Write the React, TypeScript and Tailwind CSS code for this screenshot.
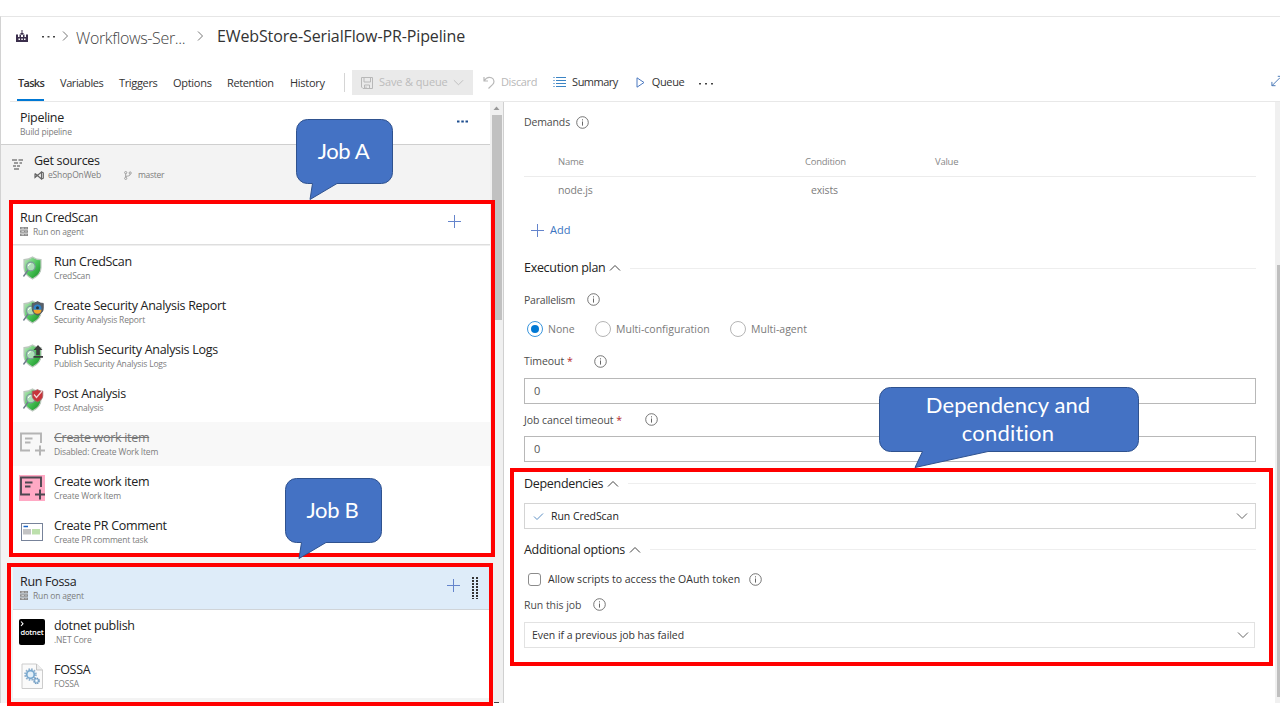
import type { ReactNode } from "react";

const HEAD = "text-[12.5px] leading-4 tracking-[-0.3px] text-[#222] whitespace-nowrap";
const SUB = "text-[8.5px] leading-3 tracking-[-0.16px] text-[#7d7d7d] whitespace-nowrap";

function Chevron({ dir, className = "" }: { dir: "up" | "down" | "right"; className?: string }) {
  const d = dir === "up" ? "M1 8.5 L6 3.5 L11 8.5" : dir === "down" ? "M1 3.5 L6 8.5 L11 3.5" : "M4 1.5 L8.5 6 L4 10.5";
  return (
    <svg viewBox="0 0 12 12" className={`size-3 shrink-0 ${className}`} fill="none" stroke="currentColor">
      <path d={d} />
    </svg>
  );
}

function Info({ className = "" }: { className?: string }) {
  return (
    <svg viewBox="0 0 13 13" className={`size-[13px] shrink-0 text-[#666] ${className}`} fill="none" stroke="currentColor">
      <circle cx="6.5" cy="6.5" r="5.8" strokeWidth="0.9" />
      <path d="M6.5 5.5V9.6M6.5 3.3V4.4" />
    </svg>
  );
}

function Plus({ className = "" }: { className?: string }) {
  return (
    <svg viewBox="0 0 13 13" className={`size-[13px] shrink-0 text-[#6484cc] ${className}`} stroke="currentColor">
      <path d="M0 6.5H13M6.5 0V13" />
    </svg>
  );
}

function Shield({ kind }: { kind: "plain" | "report" | "publish" | "post" }) {
  const id = `g-${kind}`;
  return (
    <svg viewBox="0 0 26 26" className="size-[26px]">
      <defs>
        <linearGradient id={id} x1="0" y1="0" x2="1" y2="1">
          <stop offset="0" stopColor="#c4e8c6" />
          <stop offset="0.5" stopColor="#4cc65a" />
          <stop offset="1" stopColor="#128a20" />
        </linearGradient>
      </defs>
      <path d="M13.500 2C11 3.800 8.500 4.600 5 4.700v8c0 6 3.800 8.800 8.500 11.300c4.700-2.500 8.500-5.300 8.500-11.300V4.700c-3.300 0-6-.9-8.500-2.700z" fill={`url(#${id})`} stroke="#bcc8be" strokeWidth="1.200" />
      <path d="M9.200 15L4.800 21" stroke="#6f7d8c" strokeWidth="1.500" strokeLinecap="round" />
      <circle cx="11.800" cy="11.500" r="4.300" fill="#b5e2c0" fillOpacity="0.9" stroke="#7f9a9c" strokeWidth="1.200" />
      <path d="M9.300 11a2.600 2.600 0 0 1 2.500-2.300" stroke="#fff" fill="none" />
      {kind === "report" && (
        <g>
          <path d="M18.500 2.500c-2 1.300-3.500 1.800-5.300 1.900v5c0 3.600 2.400 5.400 5.300 6.800c3-1.400 5.800-3.200 5.800-6.800v-5c-2 0-3.800-.6-5.800-1.900z" fill="#59616a" stroke="#4b5159" strokeWidth="0.800" />
          <circle cx="18.500" cy="9.300" r="3.900" fill="#2f83ca" />
          <path d="M14.600 10.800a3.900 3.900 0 0 0 7.800 0z" fill="#f3a52c" />
          <circle cx="18.500" cy="8.800" r="1.500" fill="#2c343b" />
        </g>
      )}
      {kind === "publish" && <path d="M19 2l4.500 5h-2.700v5h-3.600V7h-2.700zM14.500 13h9.500v1.800h-9.500z" fill="#3d3d3d" />}
      {kind === "post" && (
        <g>
          <path d="M18.500 2.500c-2 1.200-3.500 1.500-5.300 1.600v4.500c0 3.400 2.400 4.900 5.300 6.200c3-1.300 5.300-2.800 5.300-6.200V4.100c-2 0-3.300-.4-5.300-1.600z" fill="#c8343a" stroke="#a06a6c" strokeWidth="0.800" />
          <path d="M15 7.500l2.500 3L23 4" stroke="#f2d6d6" strokeWidth="1.200" fill="none" />
        </g>
      )}
    </svg>
  );
}

function WorkItem({ active }: { active?: boolean }) {
  return (
    <svg viewBox="0 0 26 26" className="size-[26px]" fill="none" stroke={active ? "#4c4750" : "#b4b4b4"} strokeWidth="2">
      {active && <path d="M0 0H26V26H0z" fill="#ffa9c4" stroke="none" />}
      <path d="M11 19.500H2V2.500H22V12M6 7.500H13.500M6 11.500H11.500" strokeWidth="1.900" />
      <path d="M16 19.500H26M21 14.500V24.500" />
    </svg>
  );
}

function PrComment() {
  return (
    <svg viewBox="0 0 26 26" className="size-[26px]">
      <rect x="2.500" y="4.500" width="21" height="17" fill="#fff" stroke="#77839a" />
      <path d="M4.500 7.500H9" stroke="#1762c4" strokeWidth="1.500" />
      <path d="M4 10H12V15.500H4z" fill="#c3c3c3" />
      <path d="M13 10H21V15.500H13z" fill="#bde0ac" />
    </svg>
  );
}

function Dotnet() {
  return (
    <div className="flex size-[26px] flex-col items-center rounded-[2px] bg-black text-white">
      <svg viewBox="0 0 26 9" className="h-[9px] w-[26px]" fill="none" stroke="#fff" strokeWidth="1.100">
        <path d="M2 2.500L4 4.700L2 7" />
      </svg>
      <span className="text-[7.5px] font-semibold leading-[9px] tracking-[-0.2px]">dotnet</span>
    </div>
  );
}

function Gears() {
  return (
    <svg viewBox="0 0 26 26" className="size-[26px]">
      <path d="M3 1H17.500L23.500 7V25.500H3z" fill="#fafafa" stroke="#cccccc" />
      <path d="M17.500 1V7H23.500" fill="#eee" stroke="#c4c4c4" />
      <circle cx="11.500" cy="11.500" r="5.400" fill="none" stroke="#8eb0ce" strokeWidth="1.800" strokeDasharray="1.600 1.228" />
      <circle cx="11.500" cy="11.500" r="3.800" fill="#e3f0f9" stroke="#79a9cf" strokeWidth="1.800" />
      <circle cx="17.500" cy="17.800" r="2.600" fill="#a9cbe5" stroke="#6f98bd" strokeWidth="1.500" strokeDasharray="1.400 0.640" />
      <circle cx="17.500" cy="17.800" r="1" fill="#fff" />
    </svg>
  );
}

function Server() {
  return (
    <svg viewBox="0 0 8 9" className="h-[9px] w-2 shrink-0">
      <path d="M0 0H8V2.500H0zM0 3.200H8V5.700H0zM0 6.400H8V9H0z" fill="#8c8c8c" />
      <path d="M1.500 1.200H4M1.500 4.400H4M1.500 7.700H4M5.500 1.200H6.500M5.500 4.400H6.500M5.500 7.700H6.500" stroke="#e6e6e6" strokeWidth="0.800" />
    </svg>
  );
}

function Task({ icon, title, sub, disabled }: { icon: ReactNode; title: string; sub: string; disabled?: boolean }) {
  return (
    <div className={`flex h-11 shrink-0 items-center pl-[6px] ${disabled ? "bg-[#f8f8f8]" : "bg-white"}`}>
      <div className="mr-[9px] shrink-0">{icon}</div>
      <div className="flex flex-col">
        <span className={`${HEAD} ${disabled ? "text-[#777]! line-through" : ""}`}>{title}</span>
        <span className={SUB}>{sub}</span>
      </div>
    </div>
  );
}

function JobHeader({ title, selected }: { title: string; selected?: boolean }) {
  return (
    <div
      className={`flex shrink-0 items-center border-b pl-[7px] ${
        selected ? "h-[43px] border-[#d0d4d8] bg-[#deecf9] pb-px" : "h-[42px] border-[#dedede] bg-white"
      }`}
    >
      <div className="flex flex-1 flex-col">
        <span className={HEAD}>{title}</span>
        <span className={`${SUB} flex items-center gap-[5px]`}>
          <Server />
          Run on agent
        </span>
      </div>
      <Plus className={selected ? "mr-[12px] mb-[4px]" : "mr-[29px] mb-[4px]"} />
      {selected && (
        <svg viewBox="0 0 6 23" className="mr-3 mb-px h-[23px] w-[6px] shrink-0" stroke="#333" strokeWidth="2" strokeDasharray="2 1">
          <path d="M1 1V23M5 1V23" />
        </svg>
      )}
    </div>
  );
}

function Section({ title, className = "" }: { title: string; className?: string }) {
  return (
    <div className={`flex shrink-0 items-center ${className}`}>
      <span className={HEAD}>{title}</span>
      <Chevron dir="up" className="ml-1 text-[#444]" />
      <div className="ml-[9px] h-px flex-1 bg-[#eee]" />
    </div>
  );
}

const LABEL = "text-[10.5px] leading-4 tracking-[-0.05px] text-[#4c4c4c] whitespace-nowrap";

function Radio({ label, checked, className = "" }: { label: string; checked?: boolean; className?: string }) {
  return (
    <div className={`flex items-center ${className}`}>
      <span
        className={`flex size-4 shrink-0 items-center justify-center rounded-full border ${
          checked ? "border-[#3a96dd]" : "border-[#b5b5b5]"
        }`}
      >
        {checked && <span className="size-2 rounded-full bg-[#0078d4]" />}
      </span>
      <span className="ml-[5px] whitespace-nowrap text-[10.5px] leading-4 text-[#7a7a7a]">{label}</span>
    </div>
  );
}

function Callout({ path, className, children }: { path: string; className: string; children: ReactNode }) {
  return (
    <div className={`absolute ${className}`}>
      <svg className="absolute inset-0 size-full overflow-visible" fill="#4472c4" stroke="#2f528f" strokeLinejoin="round">
        <path d={path} />
      </svg>
      <div className="relative flex h-16 flex-col items-center justify-center pr-[2px] font-[Lato] text-[22px] leading-7 text-white">
        {children}
      </div>
    </div>
  );
}

const JOB_BUBBLE = "M11.500 .5H85.500a11 11 0 0 1 11 11V53.500a11 11 0 0 1-11 11H41L14 80.500L16.500 64.500H11.500a11 11 0 0 1-11-11V11.500A11 11 0 0 1 11.500 .5z";
const DEP_BUBBLE = "M11.500 .5H248.500a11 11 0 0 1 11 11V53.500a11 11 0 0 1-11 11H109L36 80.500L43.500 64.500H11.500a11 11 0 0 1-11-11V11.500A11 11 0 0 1 11.500 .5z";

function Header() {
  return (
    <>
      <header className="flex h-[47px] shrink-0 items-center pl-[15px] pb-[9px] text-[16px]">
        <svg viewBox="0 0 12 12" className="mb-px size-3 shrink-0" fill="#3b2f4c">
          <path d="M0 4.500H2V7H3.500V4.500H5V7H7V4.500H8.500V7H10V4.500H12V12H0z" />
          <path d="M5.500 0H6.500V3H8L6 5.300L4 3H5.500z" />
          <path d="M2.500 8.500H4V10H2.500zM5.300 8.500H6.800V10H5.300zM8 8.500H9.500V10H8z" fill="#fff" />
        </svg>
        <svg viewBox="0 0 13 3" className="ml-[14px] h-[3px] w-[13px]" fill="#444">
          <path d="M0 1H2V2.500H0zM5.500 1H7.500V2.500H5.500zM11 1H13V2.500H11z" />
        </svg>
        <Chevron dir="right" className="ml-1 text-[#777]" />
        <span className="ml-[5px] mt-[3px] w-[118px] whitespace-nowrap font-light tracking-[-0.35px] text-[#444]">Workflows-Ser...</span>
        <Chevron dir="right" className="text-[#777]" />
        <span className="ml-[11px] whitespace-nowrap tracking-[-0.12px] text-[#333]">EWebStore-SerialFlow-PR-Pipeline</span>
      </header>
      <nav className="flex h-[37px] shrink-0 items-stretch whitespace-nowrap text-[11px] text-[#333]">
        <div className="flex w-[326px] items-stretch pl-4 tracking-[-0.4px] leading-4">
          <div className="flex w-[27px] items-center border-b-2 border-[#0078d4] pt-[2px] font-semibold tracking-[-0.7px]">
            <span className="pl-px">Tasks</span>
          </div>
          <span className="ml-4 mt-[11px] w-[59px]">Variables</span>
          <span className="mt-[11px] w-[54px] tracking-[-0.34px]">Triggers</span>
          <span className="mt-[11px] w-[54px] tracking-[-0.28px]">Options</span>
          <span className="mt-[11px] w-[63px] tracking-[-0.36px]">Retention</span>
          <span className="mt-[11px] tracking-[-0.28px]">History</span>
        </div>
        <div className="ml-[17px] mt-[9px] h-[19px] w-px bg-[#d5d5d5]" />
        <div className="ml-[7px] mt-[6px] flex h-[25px] w-[121px] items-center bg-[#eaeaea] pl-[9px] text-[#bcbcbc]">
          <svg viewBox="0 0 12 12" className="size-3" fill="none" stroke="#b8b8b8">
            <path d="M.5 .5H11.500V11.500H2L.5 10zM3 .5V5H9.500V.5M3.500 11.500V8H8.500V11.500M5 9.500V11.500" />
          </svg>
          <span className="ml-[6px] tracking-[-0.12px]">Save &amp; queue</span>
          <Chevron dir="down" className="ml-[5px] size-[11px]!" />
        </div>
        <div className="mt-[10px] flex h-4 items-center text-[#b8b8b8]">
          <svg viewBox="0 0 12 13" className="ml-[10px] h-[13px] w-3" fill="none" stroke="currentColor" strokeWidth="1.200">
            <path d="M1 1V5H5M1.200 4.800C3 1.800 6 .8 8.500 1.800C11.500 3.200 11.600 6.500 9.500 8.700L5.500 12.500" />
          </svg>
          <span className="ml-[6px] tracking-[-0.36px]">Discard</span>
        </div>
        <div className="mt-[10px] flex h-4 items-center">
          <svg viewBox="0 0 13 10" className="ml-4 h-[10px] w-[13px]" stroke="#3b84c4">
            <path d="M0 .5H2M0 3.500H2M0 6.500H2M0 9.500H2" stroke="#88b2da" />
            <path d="M3 .5H13M3 3.500H13M3 6.500H13M3 9.500H13" />
          </svg>
          <span className="ml-[6px] tracking-[-0.5px]">Summary</span>
        </div>
        <div className="mt-[10px] flex h-4 items-center">
          <svg viewBox="0 0 9 11" className="ml-[18px] h-[11px] w-[9px]" fill="none" stroke="#4a78c0">
            <path d="M1 .8V10.200L8 5.500z" />
          </svg>
          <span className="ml-[7px] tracking-[-0.4px]">Queue</span>
          <svg viewBox="0 0 14 3" className="ml-[15px] mt-[3px] h-[3px] w-[14px]" fill="#444">
            <path d="M0 1H2V2.500H0zM6 1H8V2.500H6zM12 1H14V2.500H12z" />
          </svg>
        </div>
        <svg viewBox="0 0 10 12" className="ml-auto mt-[11px] h-3 w-[9px]" fill="none" stroke="#3a6cb0">
          <path d="M1 7V11.200H5M1.300 11L10 2.300M7.500 .8H10" />
        </svg>
      </nav>
    </>
  );
}

function LeftPanel() {
  return (
    <div className="flex w-[489px] shrink-0 flex-col bg-[#f3f3f3]">
      <div className="flex h-[43px] shrink-0 items-center border-b border-[#cfcfcf] bg-white pl-[19px]">
        <div className="flex flex-1 flex-col pt-px">
          <span className={HEAD}>Pipeline</span>
          <span className={SUB}>Build pipeline</span>
        </div>
        <svg viewBox="0 0 11 3" className="mr-[22px] mt-[-4px] h-[3px] w-[11px]" fill="#1e4e8f">
          <path d="M0 .5H2.500V2.500H0zM4.300 .5H6.800V2.500H4.300zM8.500 .5H11V2.500H8.500z" />
        </svg>
      </div>
      <div className="flex h-[58px] shrink-0 pl-[11px] pt-2">
        <svg viewBox="0 0 11 11" className="mt-[6px] size-[11px]" stroke="#444" strokeWidth="1.200">
          <path d="M0 1H5M6.500 1H11M2 4H6M7.500 4H10M1 7H4M5 7H8M2 10H7" />
        </svg>
        <div className="ml-[11px] flex flex-col">
          <span className={HEAD}>Get sources</span>
          <span className={`${SUB} flex items-center`}>
            <svg viewBox="0 0 10 9" className="mr-1 h-[9px] w-[10px]" fill="none" stroke="#666" strokeWidth="1.200">
              <path d="M1 2.500V6.500L7.500 1V8L1 2.500M1 6.500L3 4.500M7.500 1L9.300 1.800V7.200L7.500 8" />
            </svg>
            <span className="w-[76px]">eShopOnWeb</span>
            <svg viewBox="0 0 8 9" className="mr-[6px] h-[9px] w-2" fill="none" stroke="#999" strokeWidth="0.900">
              <circle cx="1.700" cy="1.600" r="1.100" />
              <circle cx="1.700" cy="7.400" r="1.100" />
              <circle cx="6.200" cy="2" r="1.100" />
              <path d="M1.700 2.700V6.300M6.200 3.100C6.200 5 4 5 1.700 5.400" />
            </svg>
            <span className="tracking-[-0.3px]">master</span>
          </span>
        </div>
      </div>
      <div className="ml-3 flex flex-col">
        <JobHeader title="Run CredScan" />
        <div className="h-px bg-[#efefef]" />
        <Task icon={<Shield kind="plain" />} title="Run CredScan" sub="CredScan" />
        <Task icon={<Shield kind="report" />} title="Create Security Analysis Report" sub="Security Analysis Report" />
        <Task icon={<Shield kind="publish" />} title="Publish Security Analysis Logs" sub="Publish Security Analysis Logs" />
        <Task icon={<Shield kind="post" />} title="Post Analysis" sub="Post Analysis" />
        <Task icon={<WorkItem />} title="Create work item" sub="Disabled: Create Work Item" disabled />
        <Task icon={<WorkItem active />} title="Create work item" sub="Create Work Item" />
        <Task icon={<PrComment />} title="Create PR Comment" sub="Create PR comment task" />
      </div>
      <div className="ml-3 mt-[13px] flex flex-col">
        <JobHeader title="Run Fossa" selected />
        <Task icon={<Dotnet />} title="dotnet publish" sub=".NET Core" />
        <Task icon={<Gears />} title="FOSSA" sub="FOSSA" />
      </div>
    </div>
  );
}

function RightPanel() {
  return (
    <div className="flex flex-1 flex-col pl-[20px] pr-[19px]">
      <div className="flex h-10 shrink-0 items-center">
        <span className={`${LABEL} tracking-[-0.13px]!`}>Demands</span>
        <Info className="ml-[6px]" />
      </div>
      <div className="mt-[6px] flex h-[29px] shrink-0 items-center border-b border-[#ececec] pl-[34px] text-[9.5px] tracking-[-0.25px] text-[#888]">
        <span className="w-[247px]">Name</span>
        <span className="w-[130px]">Condition</span>
        <span>Value</span>
      </div>
      <div className="flex h-[27px] shrink-0 items-center pl-[34px] text-[10.5px] text-[#7c7c7c]">
        <span className="w-[253px] tracking-[-0.14px]">node.js</span>
        <span className="tracking-[-0.14px]">exists</span>
      </div>
      <div className="mt-[13px] flex h-[27px] shrink-0 items-center pl-[7px]">
        <Plus />
        <span className="ml-[6px] text-[11px] text-[#3a74bf]">Add</span>
      </div>
      <Section title="Execution plan" className="mt-[10px] h-7" />
      <div className="flex h-[35px] shrink-0 items-center">
        <span className={`${LABEL} tracking-[-0.22px]!`}>Parallelism</span>
        <Info className="ml-[12px]" />
      </div>
      <div className="flex h-[23px] shrink-0 items-center pl-[3px]">
        <Radio label="None" checked className="w-[68px]" />
        <Radio label="Multi-configuration" className="w-[135px]" />
        <Radio label="Multi-agent" />
      </div>
      <div className="mt-[4px] flex h-[34px] shrink-0 items-center">
        <span className={LABEL}>
          Timeout <b className="font-normal text-[#b5282e]">*</b>
        </span>
        <Info className="ml-[21px]" />
      </div>
      <div className="flex h-[26px] shrink-0 items-center border border-[#b8b8b8] pl-[9px] text-[11px] text-[#555]">0</div>
      <div className="flex h-8 shrink-0 items-center pb-px">
        <span className={LABEL}>
          Job cancel timeout <b className="font-normal text-[#b5282e]">*</b>
        </span>
        <Info className="ml-[23px]" />
      </div>
      <div className="flex h-[26px] shrink-0 items-center border border-[#b8b8b8] pl-[9px] text-[11px] text-[#555]">0</div>
      <Section title="Dependencies" className="mt-[2px] h-[39px]" />
      <div className="flex h-[26px] shrink-0 items-center border border-[#d4d4d4] pl-2 pr-[7px]">
        <svg viewBox="0 0 11 9" className="h-[9px] w-[11px]" fill="none" stroke="#5b8fc4">
          <path d="M1 4.500L4 7.500L10 1.500" />
        </svg>
        <span className={`${LABEL} ml-[7px] flex-1 text-[#222]!`}>Run CredScan</span>
        <Chevron dir="down" className="text-[#666]" />
      </div>
      <Section title="Additional options" className="h-[41px]" />
      <div className="flex h-[18px] shrink-0 items-center pl-1">
        <span className="size-[13px] rounded-[3px] border border-[#8c8c8c]" />
        <span className={`${LABEL} ml-[7px] tracking-[0px]! text-[#333]!`}>Allow scripts to access the OAuth token</span>
        <Info className="ml-[9px]" />
      </div>
      <div className="flex h-[34px] shrink-0 items-center pb-px">
        <span className={LABEL}>Run this job</span>
        <Info className="ml-3" />
      </div>
      <div className="mr-px flex h-[26px] shrink-0 items-center border border-[#e2e2e2] pl-[7px] pr-[5px]">
        <span className={`${LABEL} flex-1 text-[#333]!`}>Even if a previous job has failed</span>
        <Chevron dir="down" className="text-[#666]" />
      </div>
    </div>
  );
}

export default function App() {
  return (
    <div className="relative h-[720px] w-[1280px] overflow-hidden bg-white pt-4 font-['Open_Sans',sans-serif]">
      <div className="flex h-[687px] flex-col overflow-hidden border-l border-t border-l-[#d2d2d2] border-t-[#e6e6e6]">
        <Header />
        <div className="ml-[9px] h-px shrink-0 bg-[#e8e8e8]" />
        <main className="flex min-h-0 flex-1">
          <LeftPanel />
          <div className="flex w-[13px] shrink-0 flex-col items-center bg-[#f0f0f0]">
            <svg viewBox="0 0 13 13" className="size-[13px] shrink-0" fill="#999">
              <path d="M6.500 4.500L9.500 8H3.500z" />
            </svg>
            <div className="h-[205px] w-[10px] bg-[#c1c1c1]" />
            <div className="mt-auto h-px w-[5px] bg-[#444]" />
          </div>
          <div className="w-px shrink-0 bg-[#d0d0d0]" />
          <RightPanel />
          <div className="flex w-[5px] shrink-0 flex-col items-end bg-[#f0f0f0]">
            <div className="mt-[163px] h-[432px] w-[3px] bg-[#bfbfbf]" />
          </div>
        </main>
      </div>

      <div className="absolute left-[9px] top-[200px] h-[357px] w-[486px] border-4 border-[#ff0000]" />
      <div className="absolute left-[7px] top-[563px] h-[143px] w-[486px] border-4 border-[#ff0000]" />
      <div className="absolute left-[510px] top-[468px] h-[198px] w-[763px] border-4 border-[#ff0000]" />

      <Callout path={JOB_BUBBLE} className="left-[296px] top-[119px] h-[81px] w-[97px]">
        <span className="tracking-[-0.4px]">Job A</span>
      </Callout>
      <Callout path={JOB_BUBBLE} className="left-[285px] top-[478px] h-[81px] w-[97px]">
        <span className="tracking-[-0.3px]">Job B</span>
      </Callout>
      <Callout path={DEP_BUBBLE} className="left-[879px] top-[387px] h-[81px] w-[260px]">
        <span className="tracking-[0.1px]">Dependency and</span>
        <span className="tracking-[0.23px]">condition</span>
      </Callout>
    </div>
  );
}
